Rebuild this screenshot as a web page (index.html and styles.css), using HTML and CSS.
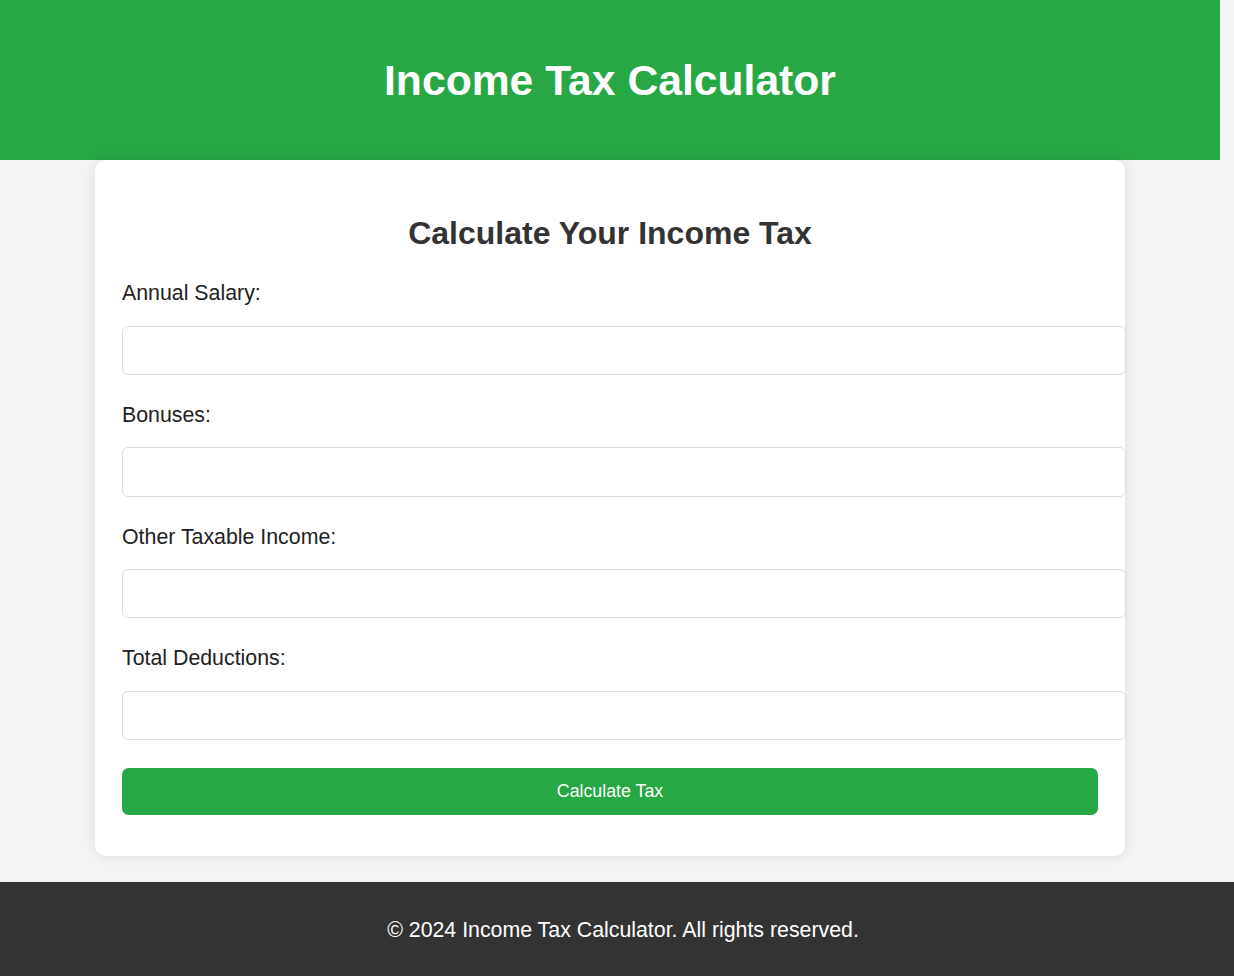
FILE: index.html
```html
<!DOCTYPE html>
<html lang="en">
<head>
<meta charset="UTF-8">
<title>Income Tax Calculator</title>
<link rel="stylesheet" href="styles.css">
</head>
<body>
<div class="page">
  <header class="site-header">
    <h1>Income Tax Calculator</h1>
  </header>
  <main class="card">
    <h2>Calculate Your Income Tax</h2>
    <form class="tax-form">
      <label for="salary">Annual Salary:</label>
      <input type="number" id="salary">
      <label for="bonuses">Bonuses:</label>
      <input type="number" id="bonuses">
      <label for="other">Other Taxable Income:</label>
      <input type="number" id="other">
      <label for="deductions">Total Deductions:</label>
      <input type="number" id="deductions">
      <button type="button" class="calc-btn">Calculate Tax</button>
    </form>
  </main>
</div>
<footer class="site-footer">
  <p>&copy; 2024 Income Tax Calculator. All rights reserved.</p>
</footer>
</body>
</html>
```
FILE: styles.css
```css
html, body {
  margin: 0;
  padding: 0;
}
body {
  background: #f4f4f4;
  font-family: "Liberation Sans", Arial, sans-serif;
  color: #333;
  overflow-x: hidden;
}
.page {
  width: 1220px;
}
.site-header {
  background: #28a745;
  color: #fff;
  text-align: center;
  padding: 26.67px;
}
.site-header h1 {
  margin: 29.6px 0 27.6px;
  font-size: 42.67px;
  font-weight: bold;
  line-height: 49px;
}
.card {
  display: block;
  width: 976px;
  margin: 0 auto 26.67px;
  padding: 26.67px;
  background: #fff;
  border-radius: 10.67px;
  box-shadow: 0 0 13px rgba(0, 0, 0, 0.1);
}
.card h2 {
  margin: 28.56px 0 25.5px;
  text-align: center;
  font-size: 32px;
  line-height: 36.8px;
  color: #333;
}
.tax-form {
  display: flex;
  flex-direction: column;
  align-items: flex-start;
}
.tax-form label {
  font-size: 21.33px;
  line-height: 24.5px;
  color: #222;
  margin: 4px 0 20px;
}
.tax-form input {
  box-sizing: border-box;
  width: 1004px;
  height: 49.3px;
  margin: 0 0 24px;
  padding: 0 13.33px;
  border: 1.33px solid #ddd;
  border-radius: 6px;
  background: #fff;
  font-family: inherit;
  font-size: 17.78px;
}
.calc-btn {
  width: 100%;
  height: 46.67px;
  margin: 4px 0 14px;
  border: none;
  border-radius: 6.67px;
  background: #28a745;
  color: #fff;
  font-family: "Liberation Sans", Arial, sans-serif;
  font-size: 17.78px;
  cursor: pointer;
}
.site-footer {
  background: #333;
  color: #fff;
  text-align: center;
  padding: 13.33px 0 13.33px 12px;
}
.site-footer p {
  margin: 22.33px 0 20.33px;
  font-size: 21.33px;
  line-height: 24.5px;
}
```
